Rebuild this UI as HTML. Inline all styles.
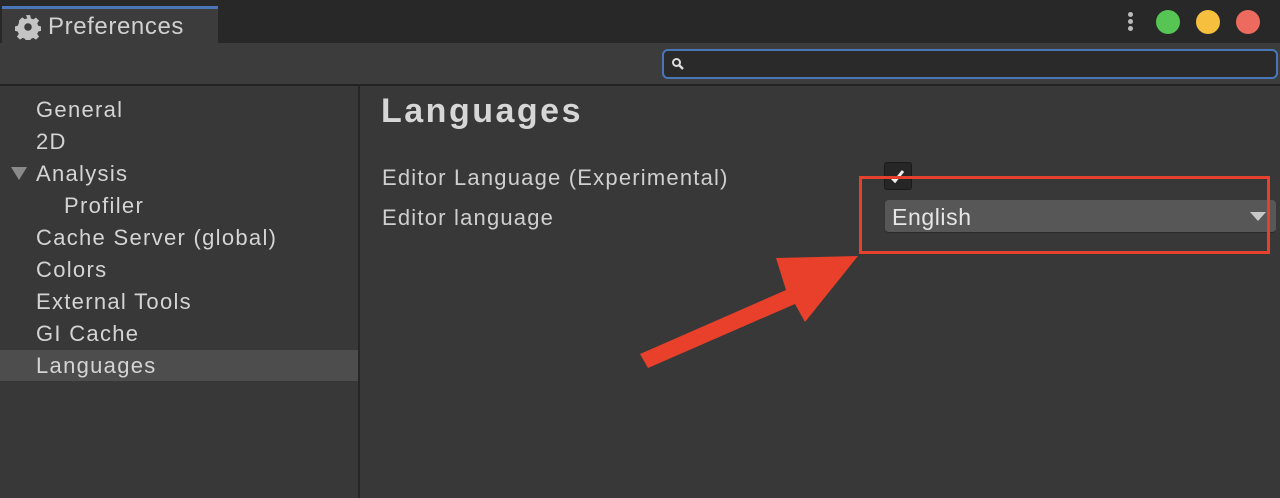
<!DOCTYPE html>
<html><head><style>
body{margin:0;width:1280px;height:498px;background:#383838;font-family:"Liberation Sans",sans-serif;overflow:hidden;position:relative;color:#d2d2d2}
div{position:absolute;box-sizing:border-box;white-space:nowrap}
.it{left:36px;font-size:22px;color:#d4d4d4;letter-spacing:1.3px}
</style></head><body>
<div style="left:0;top:0;width:1280px;height:43px;background:#282828"></div>
<div style="left:2px;top:6px;width:216px;height:38px;background:#3c3c3c;border-top:3px solid #4a76b8"></div>
<svg style="position:absolute;left:15px;top:14px" width="26" height="26" viewBox="0 0 24 24"><path fill="#c4c4c4" d="M10 1h4l.6 3 2.2 1 2.6-1.7 2.8 2.8-1.7 2.6 1 2.2 3 .6v4l-3 .6-1 2.2 1.7 2.6-2.8 2.8-2.6-1.7-2.2 1-.6 3h-4l-.6-3-2.2-1-2.6 1.7-2.8-2.8 1.7-2.6-1-2.2-3-.6v-4l3-.6 1-2.2L3.8 5.9l2.8-2.8 2.6 1.7 2.2-1z"/><circle cx="12" cy="12" r="3.5" fill="#3c3c3c"/></svg>
<div style="left:48px;top:13px;font-size:24px;color:#d0d0d0;letter-spacing:0.6px">Preferences</div>
<div style="left:1128px;top:12px;width:5px;height:5px;border-radius:50%;background:#bbb"></div>
<div style="left:1128px;top:19px;width:5px;height:5px;border-radius:50%;background:#bbb"></div>
<div style="left:1128px;top:26px;width:5px;height:5px;border-radius:50%;background:#bbb"></div>
<div style="left:1156px;top:10px;width:24px;height:24px;border-radius:50%;background:#56c553"></div>
<div style="left:1196px;top:10px;width:24px;height:24px;border-radius:50%;background:#f6bf3e"></div>
<div style="left:1236px;top:10px;width:24px;height:24px;border-radius:50%;background:#ec6a5e"></div>
<div style="left:0;top:43px;width:1280px;height:41px;background:#3c3c3c"></div>
<div style="left:662px;top:49px;width:616px;height:30px;background:#2a2a2a;border:2px solid #4a76b8;border-radius:6px"></div>
<svg style="position:absolute;left:671px;top:57px" width="14" height="14" viewBox="0 0 14 14"><circle cx="5.5" cy="5.5" r="3.5" stroke="#ddd" stroke-width="2" fill="none"/><path d="M8 8l4 4" stroke="#ddd" stroke-width="2.5"/></svg>
<div style="left:0;top:84px;width:1280px;height:2px;background:#232323"></div>
<div style="left:358px;top:86px;width:2px;height:412px;background:#262626"></div>
<div style="left:0;top:350px;width:358px;height:31px;background:#4d4d4d"></div>
<div class="it" style="top:97px">General</div>
<div class="it" style="top:129px">2D</div>
<div style="left:11px;top:167px;width:0;height:0;border-left:8px solid transparent;border-right:8px solid transparent;border-top:13px solid #8a8a8a"></div>
<div class="it" style="top:161px">Analysis</div>
<div class="it" style="top:193px;left:64px">Profiler</div>
<div class="it" style="top:225px">Cache Server (global)</div>
<div class="it" style="top:257px">Colors</div>
<div class="it" style="top:289px">External Tools</div>
<div class="it" style="top:321px">GI Cache</div>
<div class="it" style="top:353px">Languages</div>
<div style="left:381px;top:92px;font-size:34px;font-weight:bold;color:#d6d6d6;letter-spacing:2.5px">Languages</div>
<div style="left:382px;top:165px;font-size:22px;color:#cfcfcf;letter-spacing:1.2px">Editor Language (Experimental)</div>
<div style="left:382px;top:205px;font-size:22px;color:#cfcfcf;letter-spacing:1.2px">Editor language</div>
<div style="left:884px;top:162px;width:28px;height:28px;background:#262626;border:1px solid #1a1a1a;border-radius:3px"></div>
<svg style="position:absolute;left:888px;top:166px" width="20" height="20"><path d="M3 11l4 4 8-10" stroke="#eee" stroke-width="3" fill="none"/></svg>
<div style="left:885px;top:200px;width:391px;height:33px;background:#575757;border-radius:4px;border-bottom:1px solid #2a2a2a"></div>
<div style="left:892px;top:204px;font-size:23px;color:#e6e6e6;letter-spacing:0.6px">English</div>
<div style="left:1250px;top:212px;width:0;height:0;border-left:8px solid transparent;border-right:8px solid transparent;border-top:9px solid #c8c8c8"></div>
<div style="left:859px;top:176px;width:411px;height:78px;border:3px solid #e5412d"></div>
<svg style="position:absolute;left:0;top:0" width="1280" height="498"><polygon fill="#e8402b" points="640,354 786,290 776,258 858,256 805,322 795,304 648,368"/></svg>
</body></html>
